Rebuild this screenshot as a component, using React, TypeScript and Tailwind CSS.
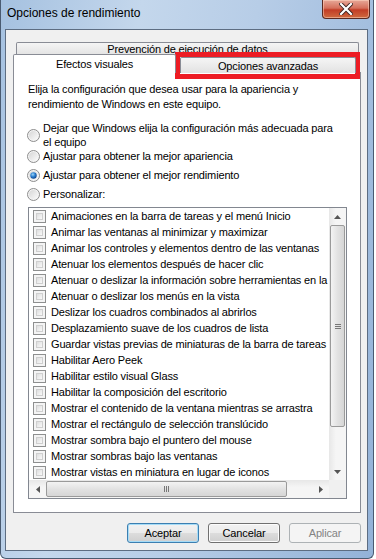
import React from "react";

const items = [
  "Animaciones en la barra de tareas y el menú Inicio",
  "Animar las ventanas al minimizar y maximizar",
  "Animar los controles y elementos dentro de las ventanas",
  "Atenuar los elementos después de hacer clic",
  "Atenuar o deslizar la información sobre herramientas en la vista",
  "Atenuar o deslizar los menús en la vista",
  "Deslizar los cuadros combinados al abrirlos",
  "Desplazamiento suave de los cuadros de lista",
  "Guardar vistas previas de miniaturas de la barra de tareas",
  "Habilitar Aero Peek",
  "Habilitar estilo visual Glass",
  "Habilitar la composición del escritorio",
  "Mostrar el contenido de la ventana mientras se arrastra",
  "Mostrar el rectángulo de selección translúcido",
  "Mostrar sombra bajo el puntero del mouse",
  "Mostrar sombras bajo las ventanas",
  "Mostrar vistas en miniatura en lugar de iconos",
];

function Radio({ checked }: { checked?: boolean }) {
  return (
    <svg width="13" height="13" viewBox="0 0 13 13" className="shrink-0">
      <defs>
        <linearGradient id="rb" x1="0" y1="0" x2="1" y2="1">
          <stop offset="0" stopColor="#d6d6d6" />
          <stop offset="1" stopColor="#fbfbfb" />
        </linearGradient>
        <radialGradient id="rc" cx="0.4" cy="0.35" r="0.7">
          <stop offset="0" stopColor="#9fd6f7" />
          <stop offset="0.5" stopColor="#2b7fd0" />
          <stop offset="1" stopColor="#0d3e86" />
        </radialGradient>
      </defs>
      <circle cx="6.5" cy="6.5" r="6" fill="#f4f4f4" stroke="#8d8d8d" strokeWidth="1" />
      <circle cx="6.5" cy="6.5" r="4.5" fill="url(#rb)" />
      {checked && <circle cx="6.5" cy="6.5" r="3.2" fill="url(#rc)" />}
    </svg>
  );
}

function Check() {
  return (
    <div className="w-[13px] h-[13px] shrink-0 border border-[#8e8f8f] bg-[#f4f4f4] p-[2px]">
      <div className="w-full h-full border border-[#cfcfcf] bg-[linear-gradient(135deg,#dedede,#f9f9f9)]" />
    </div>
  );
}

function Arrow({ dir }: { dir: "up" | "down" | "left" | "right" }) {
  const pts: Record<string, string> = {
    up: "0,4 7,4 3.5,0",
    down: "0,0 7,0 3.5,4",
    left: "4,0 4,7 0,3.5",
    right: "0,0 0,7 4,3.5",
  };
  const vertical = dir === "up" || dir === "down";
  return (
    <svg width={vertical ? 7 : 4} height={vertical ? 4 : 7}>
      <polygon points={pts[dir]} fill="#555" />
    </svg>
  );
}

function Button({ children, kind }: { children: React.ReactNode; kind: "default" | "normal" | "disabled" }) {
  const border =
    kind === "default"
      ? "border-[#3c7fb1] shadow-[inset_0_0_0_1px_#a6dcf7]"
      : kind === "normal"
      ? "border-[#707070] shadow-[inset_0_0_0_1px_#fcfcfc]"
      : "border-[#adb2b5]";
  const bg =
    kind === "disabled"
      ? "bg-[#f4f4f4] text-[#838383]"
      : "bg-[linear-gradient(#f2f2f2_0%,#ebebeb_50%,#dddddd_50%,#cfcfcf_100%)] text-black";
  return (
    <div className={`w-[72px] h-[20px] rounded-[3px] border flex items-center justify-center ${border} ${bg}`}>
      {children}
    </div>
  );
}

export default function App() {
  return (
    <div
      className="w-[376px] h-[559px] bg-white flex overflow-hidden text-[11px] leading-[15px] tracking-[-0.15px] text-black"
      style={{ fontFamily: '"Liberation Sans", Arial, sans-serif' }}
    >
      <div className="w-[374px] h-[559px] flex flex-col border border-t-0 border-[#4a5b71] rounded-b-[6px] bg-[linear-gradient(100deg,#a5c1e0_0%,#c4d7ec_30%,#b7cde7_55%,#93b2d8_100%)]">
        {/* title bar */}
        <div className="h-[29px] relative pl-[6px] pt-[5px] text-[12px] leading-[16px] tracking-normal shrink-0">
          Opciones de rendimiento
          <div className="absolute right-[3px] top-0 w-[48px] h-[19px] rounded-b-[4px] border border-t-0 border-[#5a2a22] bg-[linear-gradient(#e7a898_0%,#d5705c_45%,#c23d26_55%,#cf6a3f_100%)] flex items-center justify-center shadow-[inset_0_0_0_1px_rgba(255,220,200,0.5)]">
            <svg width="14" height="12" viewBox="0 0 14 12">
              <path d="M2 1 L12 11 M12 1 L2 11" stroke="#3b2320" strokeWidth="4" strokeLinecap="square" />
              <path d="M2 1 L12 11 M12 1 L2 11" stroke="#ffffff" strokeWidth="2.2" strokeLinecap="square" />
            </svg>
          </div>
        </div>
        {/* client area */}
        <div className="ml-[4px] mr-[5px] h-[522px] shrink-0 border border-[#5d6d82] bg-[#f0f0f0] relative flex flex-col pt-[12px] pl-[7px] pr-[6px]">
          {/* tab row 1 */}
          <div className="ml-[3px] mr-[2px] h-[12px] border border-b-0 border-[#898c95] rounded-t-[2px] bg-[linear-gradient(#f5f5f5,#e4e4e4)] flex justify-center items-start leading-[12px]">
            Prevención de ejecución de datos
          </div>
          {/* tab row 2 */}
          <div className="h-[19px] -mb-[1px] flex items-end relative z-10">
            <div className="w-[163px] h-[19px] border border-b-0 border-[#898c95] rounded-t-[2px] bg-white flex justify-center pt-[2px]">
              Efectos visuales
            </div>
            <div className="ml-[4px] w-[176px] h-[16px] border border-b-0 border-[#898c95] rounded-t-[2px] bg-[linear-gradient(#f5f5f5,#e2e2e2)] flex justify-center pt-[1px] leading-[14px]">
              Opciones avanzadas
            </div>
          </div>
          {/* panel */}
          <div className="h-[441px] border border-[#898c95] bg-white pl-[14px] pr-[13px] pt-[9px]">
            <p>
              Elija la configuración que desea usar para la apariencia y
              <br />
              rendimiento de Windows en este equipo.
            </p>
            <div className="mt-[9px] flex flex-col -ml-[1px]">
              <div className="flex items-center gap-[3px]">
                <Radio />
                <div className="leading-[14px]">
                  Dejar que Windows elija la configuración más adecuada para
                  <br />
                  el equipo
                </div>
              </div>
              <div className="flex items-center gap-[3px]">
                <Radio />
                <div>Ajustar para obtener la mejor apariencia</div>
              </div>
              <div className="mt-[4px] flex items-center gap-[3px]">
                <Radio checked />
                <div>Ajustar para obtener el mejor rendimiento</div>
              </div>
              <div className="mt-[4px] flex items-center gap-[3px]">
                <Radio />
                <div>Personalizar:</div>
              </div>
            </div>
            {/* listbox */}
            <div className="mt-[5px] w-[319px] h-[292px] border border-[#828790] flex flex-col">
              <div className="flex h-[272px]">
                <div className="w-[300px] overflow-hidden">
                  {items.map((t) => (
                    <div key={t} className="h-[16px] flex items-center pl-[4px] gap-[5px] whitespace-nowrap">
                      <Check />
                      <span>{t}</span>
                    </div>
                  ))}
                </div>
                {/* vertical scrollbar */}
                <div className="w-[17px] flex flex-col bg-[linear-gradient(90deg,#e7e7e7,#f5f5f5_40%,#f5f5f5)]">
                  <div className="h-[17px] flex items-center justify-center">
                    <Arrow dir="up" />
                  </div>
                  <div className="h-[202px] mx-[1px] rounded-[2px] border border-[#9a9a9a] bg-[linear-gradient(90deg,#f3f3f3,#e2e2e2_50%,#d6d6d6)] flex items-center justify-center">
                    <div className="flex flex-col gap-[1px]">
                      <div className="w-[6px] h-[1px] bg-[#777]" />
                      <div className="w-[6px] h-[1px] bg-[#777]" />
                      <div className="w-[6px] h-[1px] bg-[#777]" />
                    </div>
                  </div>
                  <div className="flex-1" />
                  <div className="h-[17px] flex items-center justify-center">
                    <Arrow dir="down" />
                  </div>
                </div>
              </div>
              {/* horizontal scrollbar */}
              <div className="flex h-[18px]">
                <div className="w-[300px] flex bg-[linear-gradient(#e7e7e7,#f5f5f5_40%,#f5f5f5)]">
                  <div className="w-[17px] flex items-center justify-center">
                    <Arrow dir="left" />
                  </div>
                  <div className="w-[241px] my-[1px] rounded-[2px] border border-[#9a9a9a] bg-[linear-gradient(#f3f3f3,#e2e2e2_50%,#d6d6d6)] flex items-center justify-center">
                    <div className="flex gap-[1px]">
                      <div className="w-[1px] h-[6px] bg-[#777]" />
                      <div className="w-[1px] h-[6px] bg-[#777]" />
                      <div className="w-[1px] h-[6px] bg-[#777]" />
                    </div>
                  </div>
                  <div className="flex-1" />
                  <div className="w-[17px] flex items-center justify-center">
                    <Arrow dir="right" />
                  </div>
                </div>
                <div className="w-[17px] bg-[#f0f0f0]" />
              </div>
            </div>
          </div>
          {/* buttons */}
          <div className="mt-[10px] flex justify-end gap-[9px]">
            <Button kind="default">Aceptar</Button>
            <Button kind="normal">Cancelar</Button>
            <Button kind="disabled">Aplicar</Button>
          </div>
          {/* red annotation */}
          <div className="absolute left-[169px] top-[22px] w-[185px] h-[27px] border-[5px] border-[#ed1c24]" />
        </div>
      </div>
    </div>
  );
}
